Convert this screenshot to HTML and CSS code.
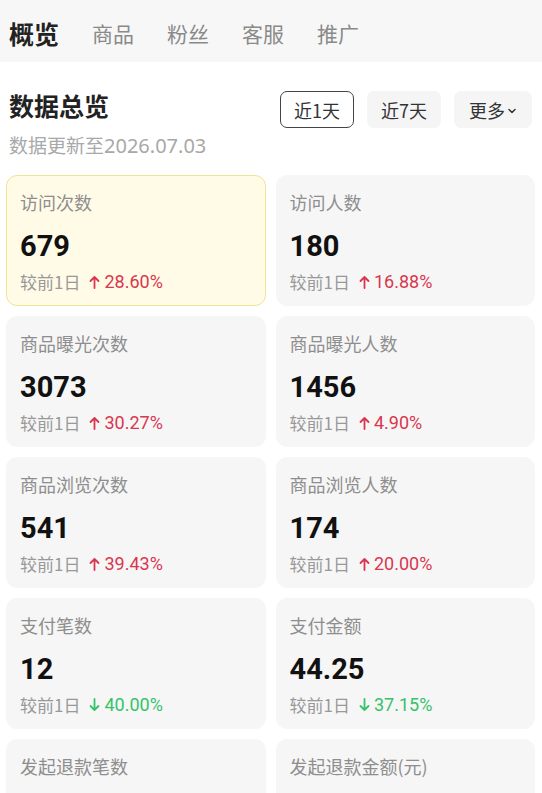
FILE: index.html
```html
<!DOCTYPE html>
<html lang="zh-CN">
<head>
    <meta charset="UTF-8">
    <meta name="viewport" content="width=device-width, initial-scale=1.0">
    <title>数据总览</title>
    <link rel="stylesheet" href="styles.css">
</head>
<body>

    <!-- Top tabs -->
    <div class="tabs">
        <span class="tab active">概览</span>
        <span class="tab">商品</span>
        <span class="tab">粉丝</span>
        <span class="tab">客服</span>
        <span class="tab">推广</span>
    </div>

    <div class="section">
        <div class="section-head">
            <h2>数据总览</h2>
            <div class="ranges">
                <button class="range selected">近1天</button>
                <button class="range">近7天</button>
                <button class="range">更多<svg class="caret" width="10" height="10" viewBox="0 0 10 10"><path d="M2 3.5 L5 6.5 L8 3.5" fill="none" stroke="#333" stroke-width="1.5" stroke-linecap="round" stroke-linejoin="round"/></svg></button>
            </div>
        </div>
        <p class="updated">数据更新至<span class="date">2026.07.03</span></p>

        <div class="grid">
            <div class="card highlight">
                <div class="label">访问次数</div>
                <div class="value">679</div>
                <div class="compare">较前1日<span class="up"><svg class="arrow" width="11" height="14" viewBox="0 0 11 14"><path d="M5.5 13 V2 M1.5 6 L5.5 2 L9.5 6" fill="none" stroke="currentColor" stroke-width="1.8" stroke-linecap="round" stroke-linejoin="round"/></svg>28.60%</span></div>
            </div>
            <div class="card">
                <div class="label">访问人数</div>
                <div class="value">180</div>
                <div class="compare">较前1日<span class="up"><svg class="arrow" width="11" height="14" viewBox="0 0 11 14"><path d="M5.5 13 V2 M1.5 6 L5.5 2 L9.5 6" fill="none" stroke="currentColor" stroke-width="1.8" stroke-linecap="round" stroke-linejoin="round"/></svg>16.88%</span></div>
            </div>
            <div class="card">
                <div class="label">商品曝光次数</div>
                <div class="value">3073</div>
                <div class="compare">较前1日<span class="up"><svg class="arrow" width="11" height="14" viewBox="0 0 11 14"><path d="M5.5 13 V2 M1.5 6 L5.5 2 L9.5 6" fill="none" stroke="currentColor" stroke-width="1.8" stroke-linecap="round" stroke-linejoin="round"/></svg>30.27%</span></div>
            </div>
            <div class="card">
                <div class="label">商品曝光人数</div>
                <div class="value">1456</div>
                <div class="compare">较前1日<span class="up"><svg class="arrow" width="11" height="14" viewBox="0 0 11 14"><path d="M5.5 13 V2 M1.5 6 L5.5 2 L9.5 6" fill="none" stroke="currentColor" stroke-width="1.8" stroke-linecap="round" stroke-linejoin="round"/></svg>4.90%</span></div>
            </div>
            <div class="card">
                <div class="label">商品浏览次数</div>
                <div class="value">541</div>
                <div class="compare">较前1日<span class="up"><svg class="arrow" width="11" height="14" viewBox="0 0 11 14"><path d="M5.5 13 V2 M1.5 6 L5.5 2 L9.5 6" fill="none" stroke="currentColor" stroke-width="1.8" stroke-linecap="round" stroke-linejoin="round"/></svg>39.43%</span></div>
            </div>
            <div class="card">
                <div class="label">商品浏览人数</div>
                <div class="value">174</div>
                <div class="compare">较前1日<span class="up"><svg class="arrow" width="11" height="14" viewBox="0 0 11 14"><path d="M5.5 13 V2 M1.5 6 L5.5 2 L9.5 6" fill="none" stroke="currentColor" stroke-width="1.8" stroke-linecap="round" stroke-linejoin="round"/></svg>20.00%</span></div>
            </div>
            <div class="card">
                <div class="label">支付笔数</div>
                <div class="value">12</div>
                <div class="compare">较前1日<span class="down"><svg class="arrow" width="11" height="14" viewBox="0 0 11 14"><path d="M5.5 1 V12 M1.5 8 L5.5 12 L9.5 8" fill="none" stroke="currentColor" stroke-width="1.8" stroke-linecap="round" stroke-linejoin="round"/></svg>40.00%</span></div>
            </div>
            <div class="card">
                <div class="label">支付金额</div>
                <div class="value">44.25</div>
                <div class="compare">较前1日<span class="down"><svg class="arrow" width="11" height="14" viewBox="0 0 11 14"><path d="M5.5 1 V12 M1.5 8 L5.5 12 L9.5 8" fill="none" stroke="currentColor" stroke-width="1.8" stroke-linecap="round" stroke-linejoin="round"/></svg>37.15%</span></div>
            </div>
            <div class="card">
                <div class="label">发起退款笔数</div>
            </div>
            <div class="card">
                <div class="label">发起退款金额(元)</div>
            </div>
        </div>
    </div>

</body>
</html>
```

FILE: styles.css
```css
/* General Styles */
body {
    margin: 0;
    font-family: "Noto Sans CJK SC", "Noto Sans", sans-serif;
    color: #222;
    background: #fff;
}

/* Top tabs */
.tabs {
    display: flex;
    align-items: center;
    gap: 33px;
    height: 62px;
    padding: 0 9px;
    background-color: #f7f7f7;
}

.tab {
    font-size: 21px;
    color: #8a8a8a;
    line-height: 30px;
    padding-top: 3px;
}

.tab.active {
    font-size: 25px;
    font-weight: bold;
    color: #222;
}

/* Overview section */
.section {
    padding: 0 7px 0 6px;
}

.section-head {
    display: flex;
    justify-content: space-between;
    align-items: flex-start;
    padding: 29px 3px 0 3px;
}

h2 {
    margin: 0;
    font-size: 25px;
    font-weight: bold;
    line-height: 28px;
    color: #222;
}

.ranges {
    display: flex;
    gap: 13px;
}

.range {
    display: flex;
    align-items: center;
    justify-content: center;
    gap: 2px;
    width: 74px;
    height: 37px;
    padding: 0;
    font-family: inherit;
    font-size: 18px;
    color: #333;
    background-color: #f5f5f5;
    border: 1px solid #f5f5f5;
    border-radius: 7px;
}

.range:last-child {
    width: 78px;
}

.range.selected {
    background-color: #fff;
    border-color: #444;
}

.caret {
    margin-top: 2px;
}

.updated {
    height: 26px;
    margin: 4px 3px 0;
    font-size: 19px;
    line-height: 26px;
    color: #a8a8a8;
}

.date {
    font-family: "Noto Sans", sans-serif;
    font-size: 20px;
    line-height: 1;
}

/* Cards */
.grid {
    display: grid;
    grid-template-columns: 1fr 1fr;
    gap: 10px;
    margin-top: 17px;
}

.card {
    height: 131px;
    box-sizing: border-box;
    padding: 14px 13px 0;
    background-color: #f6f6f6;
    border: 1px solid #f6f6f6;
    border-radius: 11px;
}

.card.highlight {
    background-color: #fffbe7;
    border-color: #f1e39a;
}

.label {
    font-size: 18px;
    line-height: 24px;
    color: #8e8e8e;
}

.value {
    margin-top: 16px;
    font-family: Roboto, "Noto Sans", sans-serif;
    font-size: 29px;
    font-weight: bold;
    line-height: 32px;
    color: #111;
}

.compare {
    display: flex;
    align-items: center;
    margin-top: 7px;
    font-size: 17px;
    line-height: 26px;
    color: #999;
}

.up,
.down {
    display: flex;
    align-items: center;
    gap: 4px;
    margin-left: 9px;
    font-family: Roboto, "Noto Sans", sans-serif;
    font-size: 18px;
}

.up {
    color: #d9364f;
}

.down {
    color: #35c36a;
}
```
